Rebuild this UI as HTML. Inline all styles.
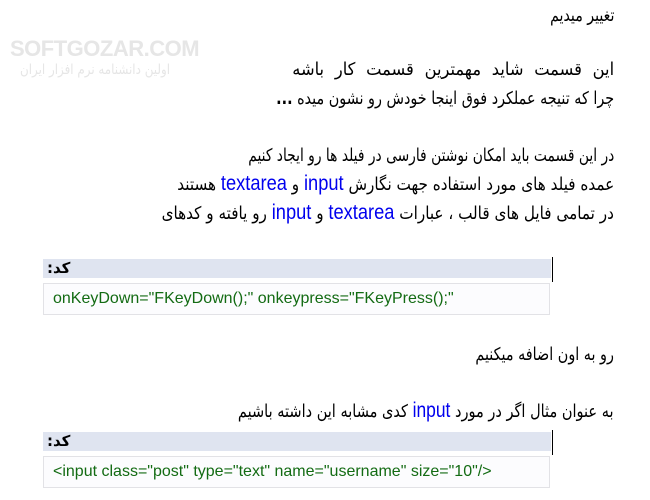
<!DOCTYPE html>
<html><head><meta charset="utf-8"><style>
body{margin:0;width:650px;height:500px;background:#fff;position:relative;overflow:hidden;font-family:"DejaVu Sans","Liberation Sans",sans-serif}
.l{position:absolute;right:36px;direction:rtl;font-size:17.5px;color:#000;white-space:nowrap;line-height:22px;transform-origin:right center}
.b{color:#0000ee;font-family:"Liberation Sans",sans-serif;font-size:21px}
.h{position:absolute;left:43px;width:508px;height:19px;background:#dfe4f0;font-weight:bold;font-size:15px;line-height:19px;padding-left:4px;box-sizing:border-box;direction:rtl;text-align:left}
.v{position:absolute;left:552px;width:1px;height:25px;background:#000}
.c{position:absolute;left:43px;width:507px;height:32px;border:1px solid #e2e2e6;background:#fcfcfe;box-sizing:border-box;font-family:"Liberation Sans",sans-serif;font-size:16px;color:#136b13;line-height:30px;padding-left:9px;white-space:nowrap}
.wm{position:absolute;left:10px;top:36px;color:#e6e6e6;font-family:"Liberation Sans",sans-serif;font-weight:bold;font-size:22px;letter-spacing:-0.5px}
.wm2{position:absolute;left:10px;top:62px;color:#e6e6e6;font-size:14px;direction:rtl;width:200px;text-align:center;white-space:nowrap;transform:scaleX(.85);transform-origin:left center}
</style></head><body>
<div class="wm">SOFTGOZAR.COM</div>
<div class="wm2">اولین دانشنامه نرم افزار ایران</div>
<div class="l" style="top:5px;transform:scaleX(.81)">تغییر میدیم</div>
<div class="l" style="top:59px;transform:scaleX(.93);word-spacing:6px">این قسمت شاید مهمترین قسمت کار باشه</div>
<div class="l" style="top:88px;transform:scaleX(.82)">چرا که تنیجه عملکرد فوق اینجا خودش رو نشون میده <b>...</b></div>
<div class="l" style="top:145px;transform:scaleX(.79)">در این قسمت باید امکان نوشتن فارسی در فیلد ها رو ایجاد کنیم</div>
<div class="l" style="top:173px;transform:scaleX(.87)">عمده فیلد های مورد استفاده جهت نگارش <span class="b">input</span> و <span class="b">textarea</span> هستند</div>
<div class="l" style="top:202px;transform:scaleX(.87)">در تمامی فایل های قالب ، عبارات <span class="b">textarea</span> و <span class="b">input</span> رو یافته و کدهای</div>
<div class="h" style="top:259px">کد:</div><div class="v" style="top:257px"></div>
<div class="c" style="top:283px">onKeyDown="FKeyDown();" onkeypress="FKeyPress();"</div>
<div class="l" style="top:344px;transform:scaleX(.82)">رو به اون اضافه میکنیم</div>
<div class="l" style="top:400px;transform:scaleX(.83)">به عنوان مثال اگر در مورد <span class="b">input</span> کدی مشابه این داشته باشیم</div>
<div class="h" style="top:432px">کد:</div><div class="v" style="top:430px"></div>
<div class="c" style="top:456px">&lt;input class="post" type="text" name="username" size="10"/&gt;</div>
</body></html>
